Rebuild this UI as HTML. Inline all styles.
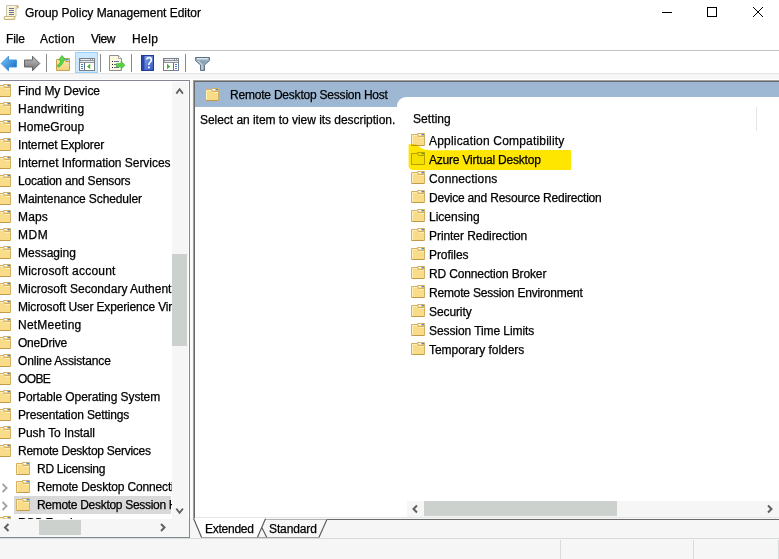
<!DOCTYPE html>
<html><head><meta charset="utf-8">
<style>
*{margin:0;padding:0;box-sizing:border-box}
html,body{width:779px;height:559px;overflow:hidden;background:#f6f6f6;font-family:"Liberation Sans",sans-serif;font-size:12px;color:#000}
.a{position:absolute}
.t{position:absolute;white-space:nowrap;line-height:18px;height:18px;-webkit-text-stroke:0.25px #000}
.fold{position:absolute;width:14px;height:13px}
</style></head><body>
<svg width="0" height="0" style="position:absolute">
<defs>
<linearGradient id="fg" x1="0" y1="0" x2="0" y2="1"><stop offset="0" stop-color="#fcecb0"/><stop offset="1" stop-color="#f3d27a"/></linearGradient>

</defs>
</svg>

<!-- title bar + menu + toolbar white -->
<div class="a" style="left:0;top:0;width:779px;height:73px;background:#fff"></div>
<div class="a" style="left:0;top:50px;width:779px;height:1px;background:#c4c4c4"></div>
<div class="a" style="left:0;top:73px;width:779px;height:1px;background:#e3e3e3"></div>

<!-- title icon -->
<svg class="a" style="left:0;top:0" width="22" height="22" viewBox="0 0 22 22">
<path d="M6.5 5.5H17L16 7V16.5H6.5Z" fill="#fbf5d6" stroke="#c9c6b4"/>
<path d="M16.5 5.5Q18.5 5.5 18.5 7.5Q17.5 8.5 16.5 8" fill="#e8d79a" stroke="#b39a50" stroke-width="0.8"/>
<path d="M9 8.5H14M9 10.5H14M9 12.5H14M9 14.5H14" stroke="#6d7090" stroke-width="1.1"/>
<path d="M4.5 16.5H14.5Q15.5 18 14.5 19.5H4.5Q3.5 18 4.5 16.5Z" fill="#f6eab8" stroke="#c7b37a"/>
<path d="M5 17.5H13" stroke="#fffdf0"/>
</svg>
<div class="t" style="left:25px;top:4px;letter-spacing:-0.03px">Group Policy Management Editor</div>

<!-- window controls -->
<div class="a" style="left:662px;top:12px;width:10px;height:1px;background:#000"></div>
<div class="a" style="left:707px;top:7px;width:10px;height:10px;border:1px solid #000"></div>
<svg class="a" style="left:752px;top:6px" width="12" height="12" viewBox="0 0 12 12"><path d="M1 1L11 11M11 1L1 11" stroke="#000" stroke-width="1"/></svg>

<!-- menu -->
<div class="t" style="left:6px;top:30px;letter-spacing:-0.17px">File</div>
<div class="t" style="left:40px;top:30px;letter-spacing:0.24px">Action</div>
<div class="t" style="left:91px;top:30px;letter-spacing:-0.50px">View</div>
<div class="t" style="left:132px;top:30px;letter-spacing:0.40px">Help</div>

<!-- toolbar -->
<svg class="a" style="left:0;top:50px" width="220" height="24" viewBox="0 50 220 24">
<defs>
<linearGradient id="bl" x1="0" y1="0" x2="1" y2="1"><stop offset="0" stop-color="#7fd0fa"/><stop offset="1" stop-color="#0a62c0"/></linearGradient>
<linearGradient id="gr" x1="0" y1="0" x2="0" y2="1"><stop offset="0" stop-color="#c4c4c4"/><stop offset="1" stop-color="#6e6e6e"/></linearGradient>
<linearGradient id="hb" x1="0" y1="0" x2="1" y2="1"><stop offset="0" stop-color="#88a8ee"/><stop offset="1" stop-color="#3458c4"/></linearGradient>
<linearGradient id="fn" x1="0" y1="0" x2="1" y2="1"><stop offset="0" stop-color="#a8bfd0"/><stop offset="1" stop-color="#4d6478"/></linearGradient>
</defs>
<!-- back -->
<path d="M1.2 63.5L8.5 56.2V60H16.5V67H8.5V70.8Z" fill="url(#bl)" stroke="#3a8ee0" stroke-width="0.9"/>
<!-- forward -->
<path d="M39.8 63.5L32.5 56.2V60H24.5V67H32.5V70.8Z" fill="url(#gr)" stroke="#5a5a5a" stroke-width="0.9"/>
<rect x="46" y="54" width="1" height="18" fill="#8a8a8a"/>
<!-- folder up -->
<path d="M56.5 59.5H64.5V58.5H69.5V70.5H56.5Z" fill="url(#fg)" stroke="#c9a250"/>
<path d="M64.5 59.5L65.5 61.5H69.5" fill="none" stroke="#c9a250"/>
<rect x="66" y="59" width="2.5" height="1.5" fill="#4a93dc"/>
<path d="M62 55.5L65.6 59.8L63.7 60C63.4 63 61.6 65.6 58.4 67.2L57.2 65.6C59.6 64 60.6 62 60.6 60L58.6 60Z" fill="#5ad84a" stroke="#3aa82a" stroke-width="0.7"/>
<!-- highlighted button -->
<rect x="75.5" y="52.5" width="22" height="20" fill="#cce8ff" stroke="#99d1ff"/>
<rect x="79.5" y="58.5" width="15" height="12" fill="#fff" stroke="#7b8087"/>
<rect x="80" y="59" width="14" height="4" fill="#8d939b"/>
<path d="M80.5 59.5H90M80.5 61.5H94" stroke="#e8eaee"/>
<rect x="91" y="59" width="1" height="1" fill="#fff"/><rect x="93" y="59" width="1" height="1" fill="#fff"/>
<path d="M84.5 63V70" stroke="#66707c"/>
<path d="M81 64.5H83M81 66.5H83M81 68.5H83" stroke="#3b7fd0"/>
<path d="M87 66.5L90.2 63.8V69.2Z" fill="#3cb22e"/>
<rect x="100" y="54" width="1" height="18" fill="#8a8a8a"/>
<!-- export list -->
<path d="M109.5 55.5H118.5L121.5 58.5V70.5H109.5Z" fill="#fdf8df" stroke="#8e8e8e"/>
<path d="M118.5 55.5V58.5H121.5" fill="#fff" stroke="#a0a0a0"/>
<rect x="112" y="61" width="1" height="1" fill="#222"/><rect x="112" y="64" width="1" height="1" fill="#222"/><rect x="112" y="67" width="1" height="1" fill="#222"/>
<path d="M114 61.5H119M114 64.5H119M114 67.5H119" stroke="#6b70a0"/>
<path d="M116.5 63.5H121V61L125 65.2L121 69.2V67H116.5Z" fill="#5ad046" stroke="#3cb82c" stroke-width="0.6"/>
<rect x="131" y="54" width="1" height="18" fill="#8a8a8a"/>
<!-- help -->
<rect x="141.5" y="55.5" width="12" height="15" fill="url(#hb)" stroke="#1f3c9c"/>
<rect x="142" y="56" width="2.5" height="14" fill="#2846b0"/>
<path d="M146.5 59.5Q147.5 57.5 149.3 57.6Q151.5 57.8 151.4 60Q151.3 61.6 149.8 62.6Q148.8 63.3 148.8 65" fill="none" stroke="#fff" stroke-width="1.6"/>
<rect x="148" y="66.5" width="1.8" height="1.8" fill="#fff"/>
<!-- action pane -->
<rect x="163.5" y="58.5" width="15" height="12" fill="#fff" stroke="#7b8087"/>
<rect x="164" y="59" width="14" height="4" fill="#8d939b"/>
<path d="M164.5 59.5H174M164.5 61.5H178" stroke="#e8eaee"/>
<rect x="175" y="59" width="1" height="1" fill="#fff"/><rect x="177" y="59" width="1" height="1" fill="#fff"/>
<path d="M173.5 63V70" stroke="#66707c"/>
<path d="M175 64.5H177M175 66.5H177M175 68.5H177" stroke="#3b7fd0"/>
<path d="M170.2 66.5L167 63.8V69.2Z" fill="#3cb22e"/>
<rect x="185" y="54" width="1" height="18" fill="#8a8a8a"/>
<!-- funnel -->
<path d="M195.5 57.5H209.5V60.5L204.5 65V70.5H200.5V65L195.5 60.5Z" fill="#9bb0c0" stroke="#5f7385" stroke-width="1"/>
<path d="M197.5 60.5H207.5L203.5 64.6V69.5H201.5V64.6Z" fill="#8da3b5"/>
<path d="M197 58.8H208" stroke="#e4f2fb" stroke-width="1.2"/>
<path d="M198 60.8L202 64.5V69.5" fill="none" stroke="#e6f1f8" stroke-width="0.9"/>
</svg>

<!-- LEFT PANE -->
<div class="a" style="left:0;top:79px;width:192px;height:1px;background:#fff"></div>
<div class="a" style="left:190px;top:79px;width:2px;height:459px;background:#fbfbfb"></div>
<div class="a" style="left:193px;top:79px;width:586px;height:1px;background:#fff"></div>
<div class="a" style="left:0;top:80px;width:190px;height:458px;border-top:1px solid #828790;border-right:1px solid #828790;border-bottom:1px solid #828790;background:#fff"></div>
<div class="a" style="left:0;top:81px;width:172px;height:438px;overflow:hidden">
 <div class="a" style="left:0;top:0;width:172px;height:460px">
<svg class="fold" viewBox="0 0 14 13" style="left:-3px;top:3px"><path d="M0.5 1.5H6.5V0.5H13.5V12.5H0.5Z" fill="#f9dc8a" stroke="#d3b064"/><rect x="7" y="1" width="6" height="2" fill="#f3d68a"/><rect x="7.5" y="1" width="3" height="1.3" fill="#fff"/><rect x="10.5" y="1" width="2.5" height="1.3" fill="#3f8fe0"/><path d="M6.5 1.5L7.5 3.5H13" fill="none" stroke="#d3b064"/><path d="M1.5 12V2.5H6M8 4.5H13" fill="none" stroke="#fdf0bc" stroke-width="0.9"/><path d="M1 12.5H13" stroke="#c49a48"/></svg>
<div class="t" style="left:18px;top:1px;letter-spacing:-0.05px">Find My Device</div>
<svg class="fold" viewBox="0 0 14 13" style="left:-3px;top:21px"><path d="M0.5 1.5H6.5V0.5H13.5V12.5H0.5Z" fill="#f9dc8a" stroke="#d3b064"/><rect x="7" y="1" width="6" height="2" fill="#f3d68a"/><rect x="7.5" y="1" width="3" height="1.3" fill="#fff"/><rect x="10.5" y="1" width="2.5" height="1.3" fill="#3f8fe0"/><path d="M6.5 1.5L7.5 3.5H13" fill="none" stroke="#d3b064"/><path d="M1.5 12V2.5H6M8 4.5H13" fill="none" stroke="#fdf0bc" stroke-width="0.9"/><path d="M1 12.5H13" stroke="#c49a48"/></svg>
<div class="t" style="left:18px;top:19px;letter-spacing:0.27px">Handwriting</div>
<svg class="fold" viewBox="0 0 14 13" style="left:-3px;top:39px"><path d="M0.5 1.5H6.5V0.5H13.5V12.5H0.5Z" fill="#f9dc8a" stroke="#d3b064"/><rect x="7" y="1" width="6" height="2" fill="#f3d68a"/><rect x="7.5" y="1" width="3" height="1.3" fill="#fff"/><rect x="10.5" y="1" width="2.5" height="1.3" fill="#3f8fe0"/><path d="M6.5 1.5L7.5 3.5H13" fill="none" stroke="#d3b064"/><path d="M1.5 12V2.5H6M8 4.5H13" fill="none" stroke="#fdf0bc" stroke-width="0.9"/><path d="M1 12.5H13" stroke="#c49a48"/></svg>
<div class="t" style="left:18px;top:37px;letter-spacing:0.09px">HomeGroup</div>
<svg class="fold" viewBox="0 0 14 13" style="left:-3px;top:57px"><path d="M0.5 1.5H6.5V0.5H13.5V12.5H0.5Z" fill="#f9dc8a" stroke="#d3b064"/><rect x="7" y="1" width="6" height="2" fill="#f3d68a"/><rect x="7.5" y="1" width="3" height="1.3" fill="#fff"/><rect x="10.5" y="1" width="2.5" height="1.3" fill="#3f8fe0"/><path d="M6.5 1.5L7.5 3.5H13" fill="none" stroke="#d3b064"/><path d="M1.5 12V2.5H6M8 4.5H13" fill="none" stroke="#fdf0bc" stroke-width="0.9"/><path d="M1 12.5H13" stroke="#c49a48"/></svg>
<div class="t" style="left:18px;top:55px;letter-spacing:-0.16px">Internet Explorer</div>
<svg class="fold" viewBox="0 0 14 13" style="left:-3px;top:75px"><path d="M0.5 1.5H6.5V0.5H13.5V12.5H0.5Z" fill="#f9dc8a" stroke="#d3b064"/><rect x="7" y="1" width="6" height="2" fill="#f3d68a"/><rect x="7.5" y="1" width="3" height="1.3" fill="#fff"/><rect x="10.5" y="1" width="2.5" height="1.3" fill="#3f8fe0"/><path d="M6.5 1.5L7.5 3.5H13" fill="none" stroke="#d3b064"/><path d="M1.5 12V2.5H6M8 4.5H13" fill="none" stroke="#fdf0bc" stroke-width="0.9"/><path d="M1 12.5H13" stroke="#c49a48"/></svg>
<div class="t" style="left:18px;top:73px;letter-spacing:-0.03px">Internet Information Services</div>
<svg class="fold" viewBox="0 0 14 13" style="left:-3px;top:93px"><path d="M0.5 1.5H6.5V0.5H13.5V12.5H0.5Z" fill="#f9dc8a" stroke="#d3b064"/><rect x="7" y="1" width="6" height="2" fill="#f3d68a"/><rect x="7.5" y="1" width="3" height="1.3" fill="#fff"/><rect x="10.5" y="1" width="2.5" height="1.3" fill="#3f8fe0"/><path d="M6.5 1.5L7.5 3.5H13" fill="none" stroke="#d3b064"/><path d="M1.5 12V2.5H6M8 4.5H13" fill="none" stroke="#fdf0bc" stroke-width="0.9"/><path d="M1 12.5H13" stroke="#c49a48"/></svg>
<div class="t" style="left:18px;top:91px;letter-spacing:-0.19px">Location and Sensors</div>
<svg class="fold" viewBox="0 0 14 13" style="left:-3px;top:111px"><path d="M0.5 1.5H6.5V0.5H13.5V12.5H0.5Z" fill="#f9dc8a" stroke="#d3b064"/><rect x="7" y="1" width="6" height="2" fill="#f3d68a"/><rect x="7.5" y="1" width="3" height="1.3" fill="#fff"/><rect x="10.5" y="1" width="2.5" height="1.3" fill="#3f8fe0"/><path d="M6.5 1.5L7.5 3.5H13" fill="none" stroke="#d3b064"/><path d="M1.5 12V2.5H6M8 4.5H13" fill="none" stroke="#fdf0bc" stroke-width="0.9"/><path d="M1 12.5H13" stroke="#c49a48"/></svg>
<div class="t" style="left:18px;top:109px;letter-spacing:-0.10px">Maintenance Scheduler</div>
<svg class="fold" viewBox="0 0 14 13" style="left:-3px;top:129px"><path d="M0.5 1.5H6.5V0.5H13.5V12.5H0.5Z" fill="#f9dc8a" stroke="#d3b064"/><rect x="7" y="1" width="6" height="2" fill="#f3d68a"/><rect x="7.5" y="1" width="3" height="1.3" fill="#fff"/><rect x="10.5" y="1" width="2.5" height="1.3" fill="#3f8fe0"/><path d="M6.5 1.5L7.5 3.5H13" fill="none" stroke="#d3b064"/><path d="M1.5 12V2.5H6M8 4.5H13" fill="none" stroke="#fdf0bc" stroke-width="0.9"/><path d="M1 12.5H13" stroke="#c49a48"/></svg>
<div class="t" style="left:18px;top:127px;letter-spacing:0.13px">Maps</div>
<svg class="fold" viewBox="0 0 14 13" style="left:-3px;top:147px"><path d="M0.5 1.5H6.5V0.5H13.5V12.5H0.5Z" fill="#f9dc8a" stroke="#d3b064"/><rect x="7" y="1" width="6" height="2" fill="#f3d68a"/><rect x="7.5" y="1" width="3" height="1.3" fill="#fff"/><rect x="10.5" y="1" width="2.5" height="1.3" fill="#3f8fe0"/><path d="M6.5 1.5L7.5 3.5H13" fill="none" stroke="#d3b064"/><path d="M1.5 12V2.5H6M8 4.5H13" fill="none" stroke="#fdf0bc" stroke-width="0.9"/><path d="M1 12.5H13" stroke="#c49a48"/></svg>
<div class="t" style="left:18px;top:145px;letter-spacing:0.60px">MDM</div>
<svg class="fold" viewBox="0 0 14 13" style="left:-3px;top:165px"><path d="M0.5 1.5H6.5V0.5H13.5V12.5H0.5Z" fill="#f9dc8a" stroke="#d3b064"/><rect x="7" y="1" width="6" height="2" fill="#f3d68a"/><rect x="7.5" y="1" width="3" height="1.3" fill="#fff"/><rect x="10.5" y="1" width="2.5" height="1.3" fill="#3f8fe0"/><path d="M6.5 1.5L7.5 3.5H13" fill="none" stroke="#d3b064"/><path d="M1.5 12V2.5H6M8 4.5H13" fill="none" stroke="#fdf0bc" stroke-width="0.9"/><path d="M1 12.5H13" stroke="#c49a48"/></svg>
<div class="t" style="left:18px;top:163px;letter-spacing:-0.01px">Messaging</div>
<svg class="fold" viewBox="0 0 14 13" style="left:-3px;top:183px"><path d="M0.5 1.5H6.5V0.5H13.5V12.5H0.5Z" fill="#f9dc8a" stroke="#d3b064"/><rect x="7" y="1" width="6" height="2" fill="#f3d68a"/><rect x="7.5" y="1" width="3" height="1.3" fill="#fff"/><rect x="10.5" y="1" width="2.5" height="1.3" fill="#3f8fe0"/><path d="M6.5 1.5L7.5 3.5H13" fill="none" stroke="#d3b064"/><path d="M1.5 12V2.5H6M8 4.5H13" fill="none" stroke="#fdf0bc" stroke-width="0.9"/><path d="M1 12.5H13" stroke="#c49a48"/></svg>
<div class="t" style="left:18px;top:181px;letter-spacing:0.21px">Microsoft account</div>
<svg class="fold" viewBox="0 0 14 13" style="left:-3px;top:201px"><path d="M0.5 1.5H6.5V0.5H13.5V12.5H0.5Z" fill="#f9dc8a" stroke="#d3b064"/><rect x="7" y="1" width="6" height="2" fill="#f3d68a"/><rect x="7.5" y="1" width="3" height="1.3" fill="#fff"/><rect x="10.5" y="1" width="2.5" height="1.3" fill="#3f8fe0"/><path d="M6.5 1.5L7.5 3.5H13" fill="none" stroke="#d3b064"/><path d="M1.5 12V2.5H6M8 4.5H13" fill="none" stroke="#fdf0bc" stroke-width="0.9"/><path d="M1 12.5H13" stroke="#c49a48"/></svg>
<div class="t" style="left:18px;top:199px;letter-spacing:0.00px">Microsoft Secondary Authenticator</div>
<svg class="fold" viewBox="0 0 14 13" style="left:-3px;top:219px"><path d="M0.5 1.5H6.5V0.5H13.5V12.5H0.5Z" fill="#f9dc8a" stroke="#d3b064"/><rect x="7" y="1" width="6" height="2" fill="#f3d68a"/><rect x="7.5" y="1" width="3" height="1.3" fill="#fff"/><rect x="10.5" y="1" width="2.5" height="1.3" fill="#3f8fe0"/><path d="M6.5 1.5L7.5 3.5H13" fill="none" stroke="#d3b064"/><path d="M1.5 12V2.5H6M8 4.5H13" fill="none" stroke="#fdf0bc" stroke-width="0.9"/><path d="M1 12.5H13" stroke="#c49a48"/></svg>
<div class="t" style="left:18px;top:217px;letter-spacing:-0.15px">Microsoft User Experience Virtualization</div>
<svg class="fold" viewBox="0 0 14 13" style="left:-3px;top:237px"><path d="M0.5 1.5H6.5V0.5H13.5V12.5H0.5Z" fill="#f9dc8a" stroke="#d3b064"/><rect x="7" y="1" width="6" height="2" fill="#f3d68a"/><rect x="7.5" y="1" width="3" height="1.3" fill="#fff"/><rect x="10.5" y="1" width="2.5" height="1.3" fill="#3f8fe0"/><path d="M6.5 1.5L7.5 3.5H13" fill="none" stroke="#d3b064"/><path d="M1.5 12V2.5H6M8 4.5H13" fill="none" stroke="#fdf0bc" stroke-width="0.9"/><path d="M1 12.5H13" stroke="#c49a48"/></svg>
<div class="t" style="left:18px;top:235px;letter-spacing:0.21px">NetMeeting</div>
<svg class="fold" viewBox="0 0 14 13" style="left:-3px;top:255px"><path d="M0.5 1.5H6.5V0.5H13.5V12.5H0.5Z" fill="#f9dc8a" stroke="#d3b064"/><rect x="7" y="1" width="6" height="2" fill="#f3d68a"/><rect x="7.5" y="1" width="3" height="1.3" fill="#fff"/><rect x="10.5" y="1" width="2.5" height="1.3" fill="#3f8fe0"/><path d="M6.5 1.5L7.5 3.5H13" fill="none" stroke="#d3b064"/><path d="M1.5 12V2.5H6M8 4.5H13" fill="none" stroke="#fdf0bc" stroke-width="0.9"/><path d="M1 12.5H13" stroke="#c49a48"/></svg>
<div class="t" style="left:18px;top:253px;letter-spacing:-0.21px">OneDrive</div>
<svg class="fold" viewBox="0 0 14 13" style="left:-3px;top:273px"><path d="M0.5 1.5H6.5V0.5H13.5V12.5H0.5Z" fill="#f9dc8a" stroke="#d3b064"/><rect x="7" y="1" width="6" height="2" fill="#f3d68a"/><rect x="7.5" y="1" width="3" height="1.3" fill="#fff"/><rect x="10.5" y="1" width="2.5" height="1.3" fill="#3f8fe0"/><path d="M6.5 1.5L7.5 3.5H13" fill="none" stroke="#d3b064"/><path d="M1.5 12V2.5H6M8 4.5H13" fill="none" stroke="#fdf0bc" stroke-width="0.9"/><path d="M1 12.5H13" stroke="#c49a48"/></svg>
<div class="t" style="left:18px;top:271px;letter-spacing:-0.16px">Online Assistance</div>
<svg class="fold" viewBox="0 0 14 13" style="left:-3px;top:291px"><path d="M0.5 1.5H6.5V0.5H13.5V12.5H0.5Z" fill="#f9dc8a" stroke="#d3b064"/><rect x="7" y="1" width="6" height="2" fill="#f3d68a"/><rect x="7.5" y="1" width="3" height="1.3" fill="#fff"/><rect x="10.5" y="1" width="2.5" height="1.3" fill="#3f8fe0"/><path d="M6.5 1.5L7.5 3.5H13" fill="none" stroke="#d3b064"/><path d="M1.5 12V2.5H6M8 4.5H13" fill="none" stroke="#fdf0bc" stroke-width="0.9"/><path d="M1 12.5H13" stroke="#c49a48"/></svg>
<div class="t" style="left:18px;top:289px;letter-spacing:-0.60px">OOBE</div>
<svg class="fold" viewBox="0 0 14 13" style="left:-3px;top:309px"><path d="M0.5 1.5H6.5V0.5H13.5V12.5H0.5Z" fill="#f9dc8a" stroke="#d3b064"/><rect x="7" y="1" width="6" height="2" fill="#f3d68a"/><rect x="7.5" y="1" width="3" height="1.3" fill="#fff"/><rect x="10.5" y="1" width="2.5" height="1.3" fill="#3f8fe0"/><path d="M6.5 1.5L7.5 3.5H13" fill="none" stroke="#d3b064"/><path d="M1.5 12V2.5H6M8 4.5H13" fill="none" stroke="#fdf0bc" stroke-width="0.9"/><path d="M1 12.5H13" stroke="#c49a48"/></svg>
<div class="t" style="left:18px;top:307px;letter-spacing:-0.08px">Portable Operating System</div>
<svg class="fold" viewBox="0 0 14 13" style="left:-3px;top:327px"><path d="M0.5 1.5H6.5V0.5H13.5V12.5H0.5Z" fill="#f9dc8a" stroke="#d3b064"/><rect x="7" y="1" width="6" height="2" fill="#f3d68a"/><rect x="7.5" y="1" width="3" height="1.3" fill="#fff"/><rect x="10.5" y="1" width="2.5" height="1.3" fill="#3f8fe0"/><path d="M6.5 1.5L7.5 3.5H13" fill="none" stroke="#d3b064"/><path d="M1.5 12V2.5H6M8 4.5H13" fill="none" stroke="#fdf0bc" stroke-width="0.9"/><path d="M1 12.5H13" stroke="#c49a48"/></svg>
<div class="t" style="left:18px;top:325px;letter-spacing:-0.14px">Presentation Settings</div>
<svg class="fold" viewBox="0 0 14 13" style="left:-3px;top:345px"><path d="M0.5 1.5H6.5V0.5H13.5V12.5H0.5Z" fill="#f9dc8a" stroke="#d3b064"/><rect x="7" y="1" width="6" height="2" fill="#f3d68a"/><rect x="7.5" y="1" width="3" height="1.3" fill="#fff"/><rect x="10.5" y="1" width="2.5" height="1.3" fill="#3f8fe0"/><path d="M6.5 1.5L7.5 3.5H13" fill="none" stroke="#d3b064"/><path d="M1.5 12V2.5H6M8 4.5H13" fill="none" stroke="#fdf0bc" stroke-width="0.9"/><path d="M1 12.5H13" stroke="#c49a48"/></svg>
<div class="t" style="left:18px;top:343px;letter-spacing:-0.06px">Push To Install</div>
<svg class="fold" viewBox="0 0 14 13" style="left:-3px;top:363px"><path d="M0.5 1.5H6.5V0.5H13.5V12.5H0.5Z" fill="#f9dc8a" stroke="#d3b064"/><rect x="7" y="1" width="6" height="2" fill="#f3d68a"/><rect x="7.5" y="1" width="3" height="1.3" fill="#fff"/><rect x="10.5" y="1" width="2.5" height="1.3" fill="#3f8fe0"/><path d="M6.5 1.5L7.5 3.5H13" fill="none" stroke="#d3b064"/><path d="M1.5 12V2.5H6M8 4.5H13" fill="none" stroke="#fdf0bc" stroke-width="0.9"/><path d="M1 12.5H13" stroke="#c49a48"/></svg>
<div class="t" style="left:18px;top:361px;letter-spacing:-0.26px">Remote Desktop Services</div>
<svg class="fold" viewBox="0 0 14 13" style="left:16px;top:381px"><path d="M0.5 1.5H6.5V0.5H13.5V12.5H0.5Z" fill="#f9dc8a" stroke="#d3b064"/><rect x="7" y="1" width="6" height="2" fill="#f3d68a"/><rect x="7.5" y="1" width="3" height="1.3" fill="#fff"/><rect x="10.5" y="1" width="2.5" height="1.3" fill="#3f8fe0"/><path d="M6.5 1.5L7.5 3.5H13" fill="none" stroke="#d3b064"/><path d="M1.5 12V2.5H6M8 4.5H13" fill="none" stroke="#fdf0bc" stroke-width="0.9"/><path d="M1 12.5H13" stroke="#c49a48"/></svg>
<div class="t" style="left:37px;top:379px;letter-spacing:-0.27px">RD Licensing</div>
<svg class="a" style="left:0;top:397px" width="10" height="18" viewBox="0 0 10 18"><path d="M2.6 6L6.6 10L2.6 14" fill="none" stroke="#a2a2a2" stroke-width="1.8"/></svg>
<svg class="fold" viewBox="0 0 14 13" style="left:16px;top:399px"><path d="M0.5 1.5H6.5V0.5H13.5V12.5H0.5Z" fill="#f9dc8a" stroke="#d3b064"/><rect x="7" y="1" width="6" height="2" fill="#f3d68a"/><rect x="7.5" y="1" width="3" height="1.3" fill="#fff"/><rect x="10.5" y="1" width="2.5" height="1.3" fill="#3f8fe0"/><path d="M6.5 1.5L7.5 3.5H13" fill="none" stroke="#d3b064"/><path d="M1.5 12V2.5H6M8 4.5H13" fill="none" stroke="#fdf0bc" stroke-width="0.9"/><path d="M1 12.5H13" stroke="#c49a48"/></svg>
<div class="t" style="left:37px;top:397px;letter-spacing:-0.15px">Remote Desktop Connection Client</div>
<div class="a" style="left:14px;top:415px;width:157px;height:18px;background:#d9d9d9"></div>
<svg class="a" style="left:0;top:415px" width="10" height="18" viewBox="0 0 10 18"><path d="M2.6 6L6.6 10L2.6 14" fill="none" stroke="#a2a2a2" stroke-width="1.8"/></svg>
<svg class="fold" viewBox="0 0 14 13" style="left:16px;top:417px"><path d="M0.5 1.5H6.5V0.5H13.5V12.5H0.5Z" fill="#f9dc8a" stroke="#d3b064"/><rect x="7" y="1" width="6" height="2" fill="#f3d68a"/><rect x="7.5" y="1" width="3" height="1.3" fill="#fff"/><rect x="10.5" y="1" width="2.5" height="1.3" fill="#3f8fe0"/><path d="M6.5 1.5L7.5 3.5H13" fill="none" stroke="#d3b064"/><path d="M1.5 12V2.5H6M8 4.5H13" fill="none" stroke="#fdf0bc" stroke-width="0.9"/><path d="M1 12.5H13" stroke="#c49a48"/></svg>
<div class="t" style="left:37px;top:415px;letter-spacing:-0.30px">Remote Desktop Session Host</div>
<svg class="fold" viewBox="0 0 14 13" style="left:-3px;top:435px"><path d="M0.5 1.5H6.5V0.5H13.5V12.5H0.5Z" fill="#f9dc8a" stroke="#d3b064"/><rect x="7" y="1" width="6" height="2" fill="#f3d68a"/><rect x="7.5" y="1" width="3" height="1.3" fill="#fff"/><rect x="10.5" y="1" width="2.5" height="1.3" fill="#3f8fe0"/><path d="M6.5 1.5L7.5 3.5H13" fill="none" stroke="#d3b064"/><path d="M1.5 12V2.5H6M8 4.5H13" fill="none" stroke="#fdf0bc" stroke-width="0.9"/><path d="M1 12.5H13" stroke="#c49a48"/></svg>
<div class="t" style="left:18px;top:433px;letter-spacing:-0.10px">RSS Feeds</div>
</div>
</div>
<!-- tree vscroll -->
<div class="a" style="left:172px;top:82px;width:16px;height:437px;background:#f6f6f6"></div>
<div class="a" style="left:172px;top:254px;width:15px;height:92px;background:#cdd1cd"></div>
<svg class="a" style="left:172px;top:84px" width="16" height="14" viewBox="0 0 16 14"><path d="M4.3 9.6L7.6 5.2L10.9 9.6" fill="none" stroke="#606060" stroke-width="1.8"/></svg>
<svg class="a" style="left:172px;top:503px" width="16" height="14" viewBox="0 0 16 14"><path d="M4.3 5.6L7.6 9.8L10.9 5.6" fill="none" stroke="#606060" stroke-width="1.8"/></svg>
<!-- tree hscroll -->
<div class="a" style="left:0;top:519px;width:189px;height:18px;background:#f6f6f6"></div>
<div class="a" style="left:39px;top:520px;width:42px;height:15px;background:#cdd1cd"></div>
<svg class="a" style="left:0;top:519px" width="14" height="18" viewBox="0 0 14 18"><path d="M8.5 5L5 8.5L8.5 12" fill="none" stroke="#606060" stroke-width="2"/></svg>
<svg class="a" style="left:156px;top:519px" width="14" height="18" viewBox="0 0 14 18"><path d="M5 5L8.5 8.5L5 12" fill="none" stroke="#606060" stroke-width="2"/></svg>

<!-- RIGHT PANE -->
<div class="a" style="left:193px;top:80px;width:586px;height:439px;background:#fff;border-top:1px solid #a0a0a0;border-left:1px solid #a0a0a0"></div>
<div class="a" style="left:194px;top:81px;width:585px;height:438px;border-top:1px solid #696969;border-left:1px solid #696969"></div>
<!-- header band -->
<div class="a" style="left:195px;top:82px;width:584px;height:25px;background:#9eb8d4"></div>
<div class="a" style="left:397px;top:97px;width:382px;height:30px;background:#fff;border-top-left-radius:9px"></div>
<svg class="fold" viewBox="0 0 14 13" style="left:205px;top:88px"><path d="M0.5 1.5H6.5V0.5H13.5V12.5H0.5Z" fill="#f9dc8a" stroke="#d3b064"/><rect x="7" y="1" width="6" height="2" fill="#f3d68a"/><rect x="7.5" y="1" width="3" height="1.3" fill="#fff"/><rect x="10.5" y="1" width="2.5" height="1.3" fill="#3f8fe0"/><path d="M6.5 1.5L7.5 3.5H13" fill="none" stroke="#d3b064"/><path d="M1.5 12V2.5H6M8 4.5H13" fill="none" stroke="#fdf0bc" stroke-width="0.9"/><path d="M1 12.5H13" stroke="#c49a48"/></svg>
<div class="t" style="left:230px;top:86px;letter-spacing:-0.21px">Remote Desktop Session Host</div>
<div class="t" style="left:200px;top:111px;letter-spacing:-0.04px">Select an item to view its description.</div>
<div class="t" style="left:413px;top:110px;letter-spacing:0.07px">Setting</div>
<div class="a" style="left:756px;top:107px;width:1px;height:24px;background:#e5e5e5"></div>
<div class="a" style="left:397px;top:132px;width:382px;height:300px">
<svg class="fold" viewBox="0 0 14 13" style="left:14px;top:1px"><path d="M0.5 1.5H6.5V0.5H13.5V12.5H0.5Z" fill="#f9dc8a" stroke="#d3b064"/><rect x="7" y="1" width="6" height="2" fill="#f3d68a"/><rect x="7.5" y="1" width="3" height="1.3" fill="#fff"/><rect x="10.5" y="1" width="2.5" height="1.3" fill="#3f8fe0"/><path d="M6.5 1.5L7.5 3.5H13" fill="none" stroke="#d3b064"/><path d="M1.5 12V2.5H6M8 4.5H13" fill="none" stroke="#fdf0bc" stroke-width="0.9"/><path d="M1 12.5H13" stroke="#c49a48"/></svg>
<div class="t" style="left:32px;top:0px;line-height:19px;height:19px;letter-spacing:0.19px">Application Compatibility</div>
<svg class="fold" viewBox="0 0 14 13" style="left:14px;top:20px"><path d="M0.5 1.5H6.5V0.5H13.5V12.5H0.5Z" fill="#f9dc8a" stroke="#d3b064"/><rect x="7" y="1" width="6" height="2" fill="#f3d68a"/><rect x="7.5" y="1" width="3" height="1.3" fill="#fff"/><rect x="10.5" y="1" width="2.5" height="1.3" fill="#3f8fe0"/><path d="M6.5 1.5L7.5 3.5H13" fill="none" stroke="#d3b064"/><path d="M1.5 12V2.5H6M8 4.5H13" fill="none" stroke="#fdf0bc" stroke-width="0.9"/><path d="M1 12.5H13" stroke="#c49a48"/></svg>
<div class="t" style="left:32px;top:19px;line-height:19px;height:19px;letter-spacing:-0.20px">Azure Virtual Desktop</div>
<svg class="fold" viewBox="0 0 14 13" style="left:14px;top:39px"><path d="M0.5 1.5H6.5V0.5H13.5V12.5H0.5Z" fill="#f9dc8a" stroke="#d3b064"/><rect x="7" y="1" width="6" height="2" fill="#f3d68a"/><rect x="7.5" y="1" width="3" height="1.3" fill="#fff"/><rect x="10.5" y="1" width="2.5" height="1.3" fill="#3f8fe0"/><path d="M6.5 1.5L7.5 3.5H13" fill="none" stroke="#d3b064"/><path d="M1.5 12V2.5H6M8 4.5H13" fill="none" stroke="#fdf0bc" stroke-width="0.9"/><path d="M1 12.5H13" stroke="#c49a48"/></svg>
<div class="t" style="left:32px;top:38px;line-height:19px;height:19px;letter-spacing:0.15px">Connections</div>
<svg class="fold" viewBox="0 0 14 13" style="left:14px;top:58px"><path d="M0.5 1.5H6.5V0.5H13.5V12.5H0.5Z" fill="#f9dc8a" stroke="#d3b064"/><rect x="7" y="1" width="6" height="2" fill="#f3d68a"/><rect x="7.5" y="1" width="3" height="1.3" fill="#fff"/><rect x="10.5" y="1" width="2.5" height="1.3" fill="#3f8fe0"/><path d="M6.5 1.5L7.5 3.5H13" fill="none" stroke="#d3b064"/><path d="M1.5 12V2.5H6M8 4.5H13" fill="none" stroke="#fdf0bc" stroke-width="0.9"/><path d="M1 12.5H13" stroke="#c49a48"/></svg>
<div class="t" style="left:32px;top:57px;line-height:19px;height:19px;letter-spacing:-0.20px">Device and Resource Redirection</div>
<svg class="fold" viewBox="0 0 14 13" style="left:14px;top:77px"><path d="M0.5 1.5H6.5V0.5H13.5V12.5H0.5Z" fill="#f9dc8a" stroke="#d3b064"/><rect x="7" y="1" width="6" height="2" fill="#f3d68a"/><rect x="7.5" y="1" width="3" height="1.3" fill="#fff"/><rect x="10.5" y="1" width="2.5" height="1.3" fill="#3f8fe0"/><path d="M6.5 1.5L7.5 3.5H13" fill="none" stroke="#d3b064"/><path d="M1.5 12V2.5H6M8 4.5H13" fill="none" stroke="#fdf0bc" stroke-width="0.9"/><path d="M1 12.5H13" stroke="#c49a48"/></svg>
<div class="t" style="left:32px;top:76px;line-height:19px;height:19px;letter-spacing:0.00px">Licensing</div>
<svg class="fold" viewBox="0 0 14 13" style="left:14px;top:96px"><path d="M0.5 1.5H6.5V0.5H13.5V12.5H0.5Z" fill="#f9dc8a" stroke="#d3b064"/><rect x="7" y="1" width="6" height="2" fill="#f3d68a"/><rect x="7.5" y="1" width="3" height="1.3" fill="#fff"/><rect x="10.5" y="1" width="2.5" height="1.3" fill="#3f8fe0"/><path d="M6.5 1.5L7.5 3.5H13" fill="none" stroke="#d3b064"/><path d="M1.5 12V2.5H6M8 4.5H13" fill="none" stroke="#fdf0bc" stroke-width="0.9"/><path d="M1 12.5H13" stroke="#c49a48"/></svg>
<div class="t" style="left:32px;top:95px;line-height:19px;height:19px;letter-spacing:-0.06px">Printer Redirection</div>
<svg class="fold" viewBox="0 0 14 13" style="left:14px;top:115px"><path d="M0.5 1.5H6.5V0.5H13.5V12.5H0.5Z" fill="#f9dc8a" stroke="#d3b064"/><rect x="7" y="1" width="6" height="2" fill="#f3d68a"/><rect x="7.5" y="1" width="3" height="1.3" fill="#fff"/><rect x="10.5" y="1" width="2.5" height="1.3" fill="#3f8fe0"/><path d="M6.5 1.5L7.5 3.5H13" fill="none" stroke="#d3b064"/><path d="M1.5 12V2.5H6M8 4.5H13" fill="none" stroke="#fdf0bc" stroke-width="0.9"/><path d="M1 12.5H13" stroke="#c49a48"/></svg>
<div class="t" style="left:32px;top:114px;line-height:19px;height:19px;letter-spacing:-0.07px">Profiles</div>
<svg class="fold" viewBox="0 0 14 13" style="left:14px;top:134px"><path d="M0.5 1.5H6.5V0.5H13.5V12.5H0.5Z" fill="#f9dc8a" stroke="#d3b064"/><rect x="7" y="1" width="6" height="2" fill="#f3d68a"/><rect x="7.5" y="1" width="3" height="1.3" fill="#fff"/><rect x="10.5" y="1" width="2.5" height="1.3" fill="#3f8fe0"/><path d="M6.5 1.5L7.5 3.5H13" fill="none" stroke="#d3b064"/><path d="M1.5 12V2.5H6M8 4.5H13" fill="none" stroke="#fdf0bc" stroke-width="0.9"/><path d="M1 12.5H13" stroke="#c49a48"/></svg>
<div class="t" style="left:32px;top:133px;line-height:19px;height:19px;letter-spacing:-0.14px">RD Connection Broker</div>
<svg class="fold" viewBox="0 0 14 13" style="left:14px;top:153px"><path d="M0.5 1.5H6.5V0.5H13.5V12.5H0.5Z" fill="#f9dc8a" stroke="#d3b064"/><rect x="7" y="1" width="6" height="2" fill="#f3d68a"/><rect x="7.5" y="1" width="3" height="1.3" fill="#fff"/><rect x="10.5" y="1" width="2.5" height="1.3" fill="#3f8fe0"/><path d="M6.5 1.5L7.5 3.5H13" fill="none" stroke="#d3b064"/><path d="M1.5 12V2.5H6M8 4.5H13" fill="none" stroke="#fdf0bc" stroke-width="0.9"/><path d="M1 12.5H13" stroke="#c49a48"/></svg>
<div class="t" style="left:32px;top:152px;line-height:19px;height:19px;letter-spacing:-0.20px">Remote Session Environment</div>
<svg class="fold" viewBox="0 0 14 13" style="left:14px;top:172px"><path d="M0.5 1.5H6.5V0.5H13.5V12.5H0.5Z" fill="#f9dc8a" stroke="#d3b064"/><rect x="7" y="1" width="6" height="2" fill="#f3d68a"/><rect x="7.5" y="1" width="3" height="1.3" fill="#fff"/><rect x="10.5" y="1" width="2.5" height="1.3" fill="#3f8fe0"/><path d="M6.5 1.5L7.5 3.5H13" fill="none" stroke="#d3b064"/><path d="M1.5 12V2.5H6M8 4.5H13" fill="none" stroke="#fdf0bc" stroke-width="0.9"/><path d="M1 12.5H13" stroke="#c49a48"/></svg>
<div class="t" style="left:32px;top:171px;line-height:19px;height:19px;letter-spacing:-0.10px">Security</div>
<svg class="fold" viewBox="0 0 14 13" style="left:14px;top:191px"><path d="M0.5 1.5H6.5V0.5H13.5V12.5H0.5Z" fill="#f9dc8a" stroke="#d3b064"/><rect x="7" y="1" width="6" height="2" fill="#f3d68a"/><rect x="7.5" y="1" width="3" height="1.3" fill="#fff"/><rect x="10.5" y="1" width="2.5" height="1.3" fill="#3f8fe0"/><path d="M6.5 1.5L7.5 3.5H13" fill="none" stroke="#d3b064"/><path d="M1.5 12V2.5H6M8 4.5H13" fill="none" stroke="#fdf0bc" stroke-width="0.9"/><path d="M1 12.5H13" stroke="#c49a48"/></svg>
<div class="t" style="left:32px;top:190px;line-height:19px;height:19px;letter-spacing:-0.08px">Session Time Limits</div>
<svg class="fold" viewBox="0 0 14 13" style="left:14px;top:210px"><path d="M0.5 1.5H6.5V0.5H13.5V12.5H0.5Z" fill="#f9dc8a" stroke="#d3b064"/><rect x="7" y="1" width="6" height="2" fill="#f3d68a"/><rect x="7.5" y="1" width="3" height="1.3" fill="#fff"/><rect x="10.5" y="1" width="2.5" height="1.3" fill="#3f8fe0"/><path d="M6.5 1.5L7.5 3.5H13" fill="none" stroke="#d3b064"/><path d="M1.5 12V2.5H6M8 4.5H13" fill="none" stroke="#fdf0bc" stroke-width="0.9"/><path d="M1 12.5H13" stroke="#c49a48"/></svg>
<div class="t" style="left:32px;top:209px;line-height:19px;height:19px;letter-spacing:-0.05px">Temporary folders</div>
</div>
<!-- highlight -->
<svg class="a" style="left:405px;top:143px;mix-blend-mode:multiply" width="170" height="30" viewBox="0 0 170 30">
<path d="M3.6 1.3H10C12 2 13 3 15 4.3C18 6.2 21 7.2 27 7.4C40 7.3 120 7 166 7V27H9C5.5 27 3.6 25.5 3.6 22Z" fill="#ffe600"/>
</svg>
<svg class="a" style="left:411px;top:152px" width="14" height="13" viewBox="0 0 14 13">
<path d="M0.5 1.5H6.5V0.5H13.5V12.5H0.5Z" fill="#f6e000" stroke="#b5a000"/>
<path d="M6.5 1.5L7.5 3.5H13" fill="none" stroke="#b5a000"/>
<rect x="10.5" y="1" width="2.5" height="1.3" fill="#4cb000"/>
</svg>

<!-- right hscroll -->
<div class="a" style="left:407px;top:501px;width:372px;height:16px;background:#f6f6f6"></div>
<div class="a" style="left:424px;top:501px;width:193px;height:15px;background:#cdd1cd"></div>
<svg class="a" style="left:407px;top:501px" width="16" height="16" viewBox="0 0 16 16"><path d="M10 4.5L6.5 8L10 11.5" fill="none" stroke="#606060" stroke-width="2"/></svg>
<svg class="a" style="left:762px;top:501px" width="16" height="16" viewBox="0 0 16 16"><path d="M6 4.5L9.5 8L6 11.5" fill="none" stroke="#606060" stroke-width="2"/></svg>

<!-- tabs -->
<div class="a" style="left:190px;top:518px;width:589px;height:20px;background:#f6f6f6"></div>
<div class="a" style="left:195px;top:517px;width:584px;height:1px;background:#e6e6e6"></div>
<div class="a" style="left:265px;top:519px;width:514px;height:1px;background:#6a6a6a"></div>
<svg class="a" style="left:190px;top:510px" width="150" height="30" viewBox="190 510 150 30">
<path d="M193.5 518L201.5 537.5H257.5L265.5 518Z" fill="#fff"/>
<path d="M261.8 527.6L266.7 537.5H319L327 519.5H265.5Z" fill="#f7f7f7"/>
<path d="M201 537.5H319.5" stroke="#a6a6a6"/>
<path d="M193.5 518.3L201.5 537.3M265.5 518.8L257.5 537.3M261.8 527.6L266.7 537.3M326.8 519.8L319 537.3" fill="none" stroke="#5a5a5a" stroke-width="1.15"/>
</svg>
<div class="t" style="left:205px;top:520px;letter-spacing:-0.26px">Extended</div>
<div class="t" style="left:269px;top:520px;letter-spacing:-0.11px">Standard</div>

<!-- status bar -->
<div class="a" style="left:0;top:538px;width:779px;height:1px;background:#d8dcd8"></div>
<div class="a" style="left:560px;top:540px;width:1px;height:19px;background:#d8dcd8"></div>
<div class="a" style="left:693px;top:540px;width:1px;height:19px;background:#d8dcd8"></div>
<div class="a" style="left:778px;top:540px;width:1px;height:19px;background:#d8dcd8"></div>


</body></html>
